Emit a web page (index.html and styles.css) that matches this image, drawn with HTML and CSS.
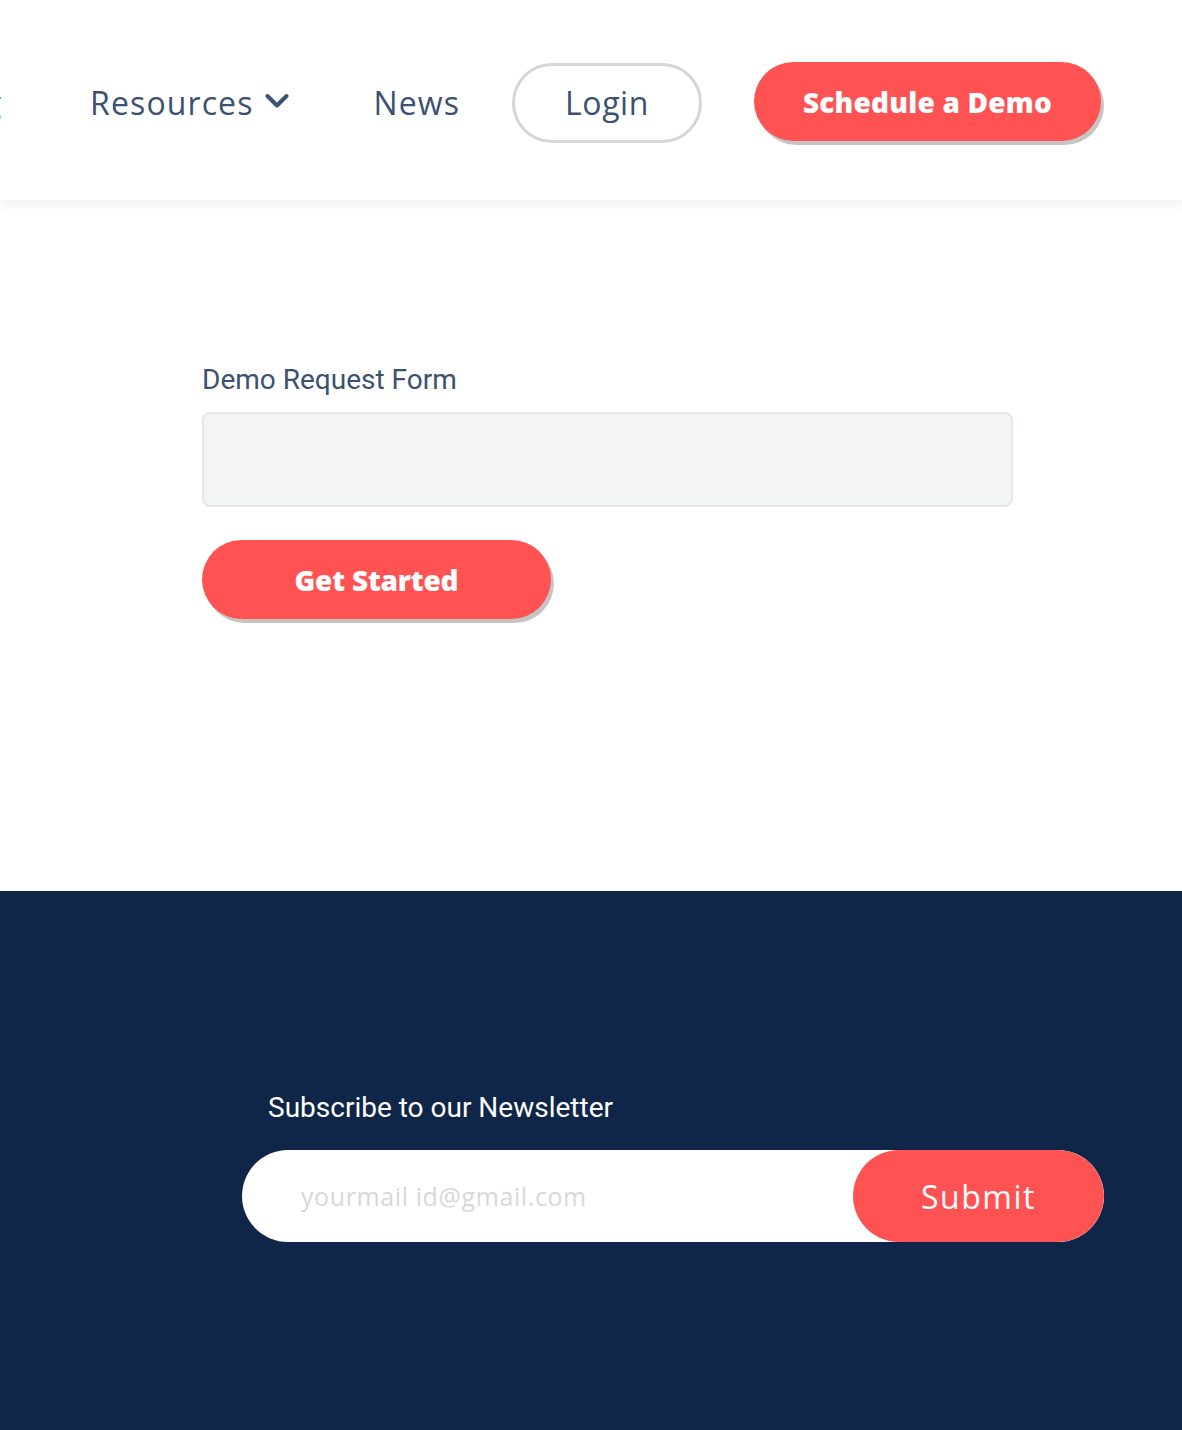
FILE: index.html
```html
<!DOCTYPE html>
<html>
    <head>
        <meta charset="utf-8">
        <title>Schedule a Demo</title>
        <link rel="stylesheet" href="styles.css">
    </head>
    <body>
        <div class="site_header">
            <div class="nav_bar">
                <a class="nav_link nav_first">Pricing</a>
                <a class="nav_link nav_dropdown">Resources
                    <svg class="chevron" width="24" height="16" viewBox="0 0 24 16"><path d="M2.5 3 L12 12.5 L21.5 3" fill="none" stroke="#3d5170" stroke-width="4" stroke-linecap="round" stroke-linejoin="round"/></svg>
                </a>
                <a class="nav_link nav_news">News</a>
                <a class="login_button">Login</a>
                <a class="red_button demo_button">Schedule a Demo</a>
            </div>
        </div>

        <div class="form_section">
            <label class="form_label">Demo Request Form</label>
            <div class="form_box"></div>
            <a class="red_button start_button">Get Started</a>
        </div>

        <div class="site_footer">
            <div class="newsletter">
                <div class="newsletter_title">Subscribe to our Newsletter</div>
                <div class="newsletter_form">
                    <input class="newsletter_input" type="text" placeholder="yourmail id@gmail.com">
                    <a class="submit_button">Submit</a>
                </div>
            </div>
        </div>
    </body>
</html>
```

FILE: styles.css
```css
body
{
    margin: 0;
    background-color: #ffffff;
    font-family: "Open Sans", "Lato", sans-serif;
    overflow: hidden;
}
/*top bar*/
.site_header
{
    height: 200px;
    background-color: #ffffff;
    box-shadow: 0 4px 14px rgba(0, 0, 0, 0.07);
    overflow: hidden;
    position: relative;
    z-index: 1;
}
.nav_bar
{
    display: flex;
    justify-content: flex-end;
    align-items: center;
    height: 200px;
    box-sizing: border-box;
    padding-top: 5px;
    padding-right: 81px;
    white-space: nowrap;
}
.nav_bar a
{
    flex-shrink: 0;/*keep every item its own width, overflow goes off the left edge*/
}
.nav_link
{
    color: #3d5170;
    font-size: 32px;
    letter-spacing: 1.1px;
    display: flex;
    align-items: center;
}
.nav_dropdown
{
    margin-left: 88px;
}
.chevron
{
    margin-left: 12px;
    margin-top: -4px;
}
.nav_news
{
    margin-left: 84px;
}
.login_button
{
    margin-left: 52px;
    box-sizing: border-box;
    width: 190px;
    height: 80px;
    border: 3px solid #d6d6d6;
    border-radius: 40px;
    display: flex;
    align-items: center;
    justify-content: center;
    color: #3d5170;
    font-size: 32px;
    font-weight: 500;
    letter-spacing: 0.6px;
}
.red_button
{
    display: flex;
    align-items: center;
    justify-content: center;
    background-color: #ff5252;
    color: #ffffff;
    font-weight: 800;
    border-radius: 40px;
    box-shadow: 3px 4px 0 #c5c5c5;
    cursor: pointer;
}
.demo_button
{
    margin-left: 52px;
    width: 347px;
    height: 79px;
    font-size: 28px;
    letter-spacing: 0.2px;
    margin-top: -2px;
}
/*form*/
.form_section
{
    height: 691px;
    padding-left: 202px;
    box-sizing: border-box;
    padding-top: 162px;
}
.form_label
{
    display: block;
    font-family: "Roboto", sans-serif;
    font-size: 28px;
    color: #3d5170;
    line-height: 36px;
}
.form_box
{
    margin-top: 14px;
    width: 811px;
    height: 95px;
    box-sizing: border-box;
    background-color: #f3f4f6;
    border: 2px solid #e6e7ea;
    border-radius: 8px;
}
.start_button
{
    margin-top: 33px;
    width: 349px;
    height: 79px;
    font-size: 28px;
    letter-spacing: -0.2px;
}
/*footer*/
.site_footer
{
    background-color: #0f2649;
    height: 539px;
    padding-top: 199px;
    box-sizing: border-box;
}
.newsletter
{
    margin-left: 242px;
    width: 862px;
}
.newsletter_title
{
    font-family: "Roboto", sans-serif;
    color: #ffffff;
    font-size: 28px;
    line-height: 36px;
    padding-left: 26px;
}
.newsletter_form
{
    margin-top: 24px;
    display: flex;
    height: 92px;
    background-color: #ffffff;
    border-radius: 46px;
    overflow: hidden;
}
.newsletter_input
{
    flex: 1;
    border: none;
    outline: none;
    background: transparent;
    padding-left: 59px;
    font-family: "Open Sans", sans-serif;
    font-size: 25px;
    letter-spacing: 0.6px;
    color: #333333;
}
.newsletter_input::placeholder
{
    color: #d8d8d8;
}
.submit_button
{
    width: 251px;
    background-color: #ff5252;
    border-radius: 46px;
    display: flex;
    align-items: center;
    justify-content: center;
    color: #ffffff;
    font-size: 32px;
    font-weight: 500;
    letter-spacing: 1.5px;
}
```
